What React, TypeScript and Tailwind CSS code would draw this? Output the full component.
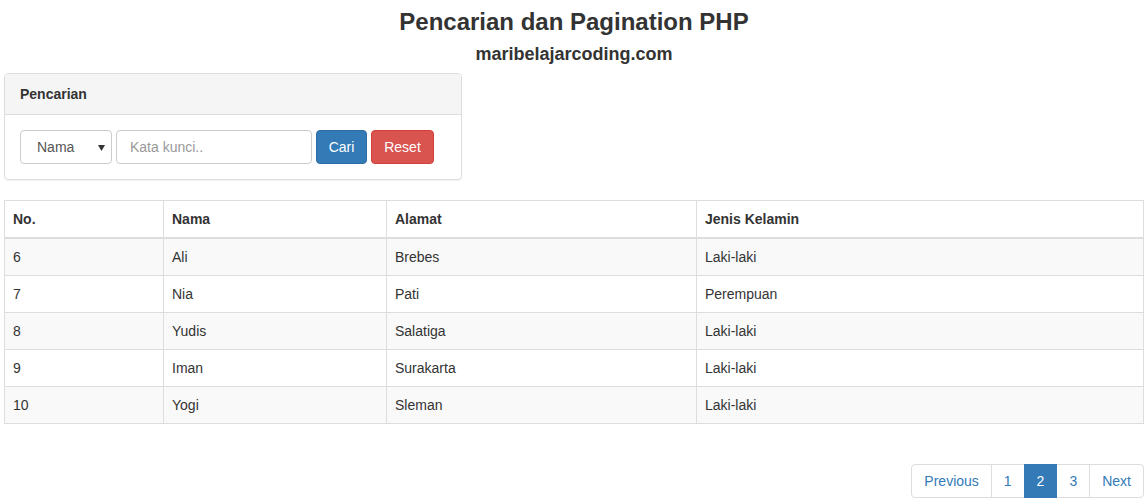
const rows = [
  { no: 6, nama: 'Ali', alamat: 'Brebes', jk: 'Laki-laki' },
  { no: 7, nama: 'Nia', alamat: 'Pati', jk: 'Perempuan' },
  { no: 8, nama: 'Yudis', alamat: 'Salatiga', jk: 'Laki-laki' },
  { no: 9, nama: 'Iman', alamat: 'Surakarta', jk: 'Laki-laki' },
  { no: 10, nama: 'Yogi', alamat: 'Sleman', jk: 'Laki-laki' },
];

const pages = ['Previous', '1', '2', '3', 'Next'];

export default function App() {
  return (
    <div className="min-h-[504px] bg-white px-[4px] text-[14px] leading-[20px] text-[#333]" style={{ fontFamily: '"Liberation Sans", Arial, sans-serif' }}>
      <h3 className="pt-[9px] text-center text-[24px] leading-[26px] font-bold">Pencarian dan Pagination PHP</h3>
      <h4 className="mt-[9px] text-center text-[18px] leading-[20px] font-bold">maribelajarcoding.com</h4>

      <div className="mt-[9px] w-[458px] rounded-[4px] border border-[#ddd] shadow-[0_1px_1px_rgba(0,0,0,0.05)]">
        <div className="rounded-t-[3px] border-b border-[#ddd] bg-[#f5f5f5] px-[15px] py-[10px] font-bold">Pencarian</div>
        <div className="flex gap-[4px] p-[15px]">
          <div className="relative flex h-[34px] w-[92px] items-center rounded-[4px] border border-[#ccc] pl-[16px] text-[#555]">
            Nama
            <svg className="absolute right-[6px] top-[14px]" width="7" height="6" viewBox="0 0 7 6">
              <path d="M0 0h7L3.5 6z" fill="#333" />
            </svg>
          </div>
          <div className="flex h-[34px] w-[196px] items-center rounded-[4px] border border-[#ccc] px-[13px] text-[#999]">Kata kunci..</div>
          <button className="h-[34px] w-[51px] rounded-[4px] border border-[#2e6da4] bg-[#337ab7] text-white">Cari</button>
          <button className="h-[34px] w-[63px] rounded-[4px] border border-[#d43f3a] bg-[#d9534f] text-white">Reset</button>
        </div>
      </div>

      <table className="mt-[20px] w-full border-collapse border border-[#ddd]">
        <thead>
          <tr>
            <th className="w-[159px] border border-b-2 border-[#ddd] p-[8px] text-left font-bold">No.</th>
            <th className="w-[223px] border border-b-2 border-[#ddd] p-[8px] text-left font-bold">Nama</th>
            <th className="w-[310px] border border-b-2 border-[#ddd] p-[8px] text-left font-bold">Alamat</th>
            <th className="border border-b-2 border-[#ddd] p-[8px] text-left font-bold">Jenis Kelamin</th>
          </tr>
        </thead>
        <tbody>
          {rows.map((r, i) => (
            <tr key={r.no} className={i % 2 === 0 ? 'bg-[#f9f9f9]' : 'bg-white'}>
              <td className="border border-[#ddd] p-[8px]">{r.no}</td>
              <td className="border border-[#ddd] p-[8px]">{r.nama}</td>
              <td className="border border-[#ddd] p-[8px]">{r.alamat}</td>
              <td className="border border-[#ddd] p-[8px]">{r.jk}</td>
            </tr>
          ))}
        </tbody>
      </table>

      <div className="mt-[40px] flex justify-end">
        <ul className="flex">
          {pages.map((p) => (
            <li
              key={p}
              className={`-ml-px border px-[12px] py-[6px] first:ml-0 first:rounded-l-[4px] last:rounded-r-[4px] ${
                p === '2' ? 'z-10 border-[#337ab7] bg-[#337ab7] text-white' : 'border-[#ddd] bg-white text-[#337ab7]'
              }`}
            >
              {p}
            </li>
          ))}
        </ul>
      </div>
    </div>
  );
}
